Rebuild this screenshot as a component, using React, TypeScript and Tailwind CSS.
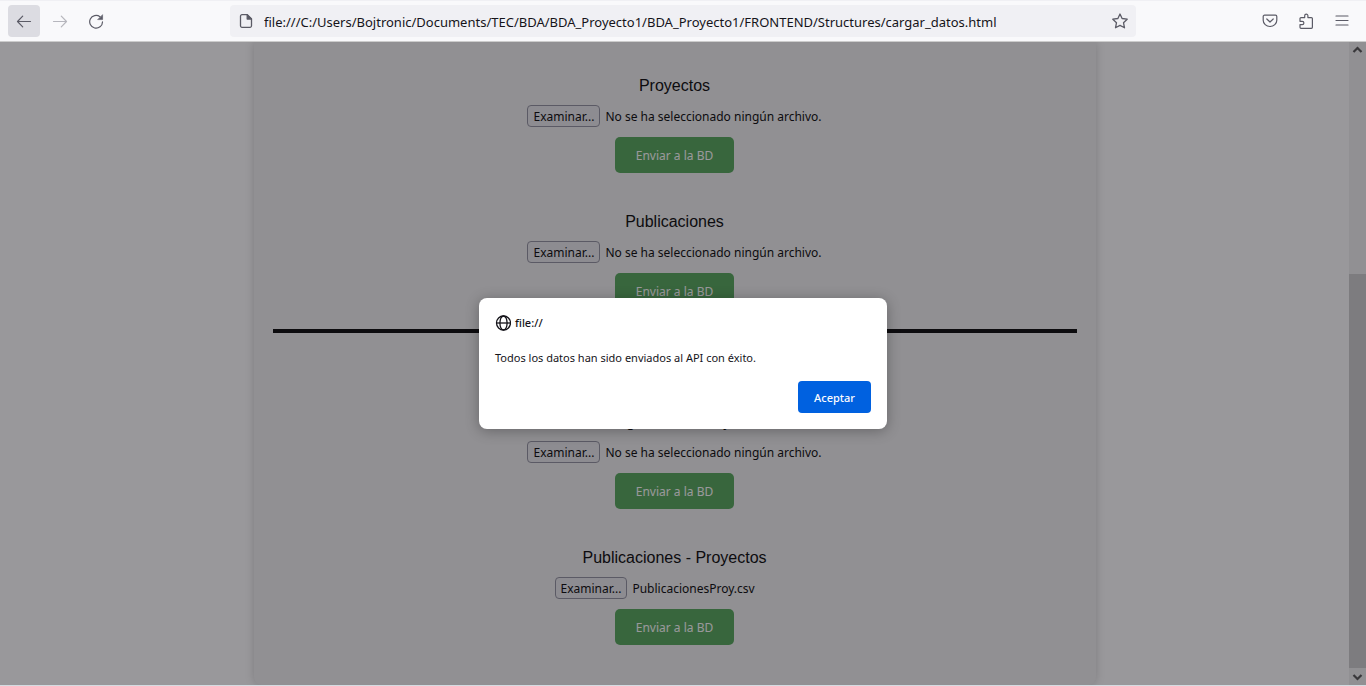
import React from "react";

type UploadProps = { id: string; title: string; fileName?: string };

function Upload({ id, title, fileName }: UploadProps) {
  return (
    <form className="flex flex-col items-center gap-2.5" onSubmit={(e) => e.preventDefault()}>
      <h3 className="font-['Liberation_Sans',sans-serif] text-base leading-[18px]">{title}</h3>
      <label
        htmlFor={id}
        className="flex h-[22px] min-w-[240px] items-center gap-[5px] font-['Noto_Sans',sans-serif] text-[12px] leading-[18px] whitespace-nowrap"
      >
        <input id={id} type="file" className="sr-only" />
        <span className="flex h-[22px] items-center rounded-[4px] border border-[#8f8f9d] bg-[#e9e9ed] px-[5px] pt-0.5">
          Examinar...
        </span>
        <span className="pt-0.5">{fileName ?? "No se ha seleccionado ningún archivo."}</span>
      </label>
      <button
        type="submit"
        className="h-9 rounded-[5px] bg-[#4fa554] px-[21px] pt-0.5 font-['Noto_Sans',sans-serif] text-[12px] text-white"
      >
        Enviar a la BD
      </button>
    </form>
  );
}

function ToolButton({
  label,
  active,
  children,
}: {
  label: string;
  active?: boolean;
  children: React.ReactNode;
}) {
  return (
    <button
      type="button"
      aria-label={label}
      className={
        active
          ? "flex size-8 items-center justify-center rounded-[4px] bg-[#dcdce2] text-[#5b5b66]"
          : "flex size-8 items-center justify-center rounded-[4px] text-[#5b5b66]"
      }
    >
      <svg viewBox="0 0 16 16" className="size-4" fill="none" stroke="currentColor" strokeWidth="1.2" strokeLinecap="round" strokeLinejoin="round" aria-hidden="true">
        {children}
      </svg>
    </button>
  );
}

function Toolbar() {
  return (
    <header className="flex h-[42px] shrink-0 items-center border-t border-b border-t-[#f0f0f4] border-b-[#cccccc] bg-[#f9f9fb] px-2">
      <nav className="flex gap-1" aria-label="Navegación">
        <ToolButton label="Atrás" active>
          <path d="M14.5 8.500H1.500M6.700 3.200 1.500 8.500l5.200 5.300" />
        </ToolButton>
        <ToolButton label="Adelante">
          <path d="M1.500 8.500h13M9.300 3.200l5.200 5.300-5.200 5.300" opacity=".42" />
        </ToolButton>
        <ToolButton label="Recargar">
          <path d="M14.500 8.900A6.400 6.400 0 1 1 12 3.700" />
          <path d="M14.600 2v4.600H10z" fill="currentColor" strokeWidth=".6" />
        </ToolButton>
      </nav>
      <div className="mx-[118px] flex h-8 min-w-0 flex-1 items-center rounded-[4px] bg-[#f0f0f4] px-2">
        <svg viewBox="0 0 16 16" className="size-4 shrink-0 text-[#5b5b66]" fill="none" stroke="currentColor" strokeWidth="1.3" strokeLinejoin="round" aria-hidden="true">
          <path d="M9.200 1.700H4A1.500 1.500 0 0 0 2.500 3.200v9.600A1.500 1.500 0 0 0 4 14.300h8a1.500 1.500 0 0 0 1.500-1.500V6z" />
          <path d="M9.200 1.700V6h4.300z" fill="currentColor" />
        </svg>
        <input
          type="text"
          aria-label="Dirección"
          defaultValue="file:///C:/Users/Bojtronic/Documents/TEC/BDA/BDA_Proyecto1/BDA_Proyecto1/FRONTEND/Structures/cargar_datos.html"
          className="ml-2.5 min-w-0 flex-1 bg-transparent pt-[3px] font-['Noto_Sans',sans-serif] text-[13px] text-[#15141a] outline-none"
        />
        <button type="button" aria-label="Añadir a marcadores" className="size-4 shrink-0 text-[#5b5b66]">
          <svg viewBox="0 0 16 16" className="size-4" fill="none" stroke="currentColor" strokeWidth="1.3" strokeLinejoin="round" aria-hidden="true">
            <path d="M8 1 10.100 5.500 15.200 6.200 11.500 9.700 12.500 14.800 8 12.400 3.500 14.800 4.500 9.700.800 6.200 5.900 5.500z" />
          </svg>
        </button>
      </div>
      <div className="flex gap-1">
        <ToolButton label="Guardar en Pocket">
          <path d="M2.500 2.200h11a1.300 1.300 0 0 1 1.300 1.300v3.700a6.800 6.300 0 0 1-13.600 0V3.500a1.300 1.300 0 0 1 1.300-1.300zM4.800 6 8 9l3.200-3" />
        </ToolButton>
        <ToolButton label="Extensiones">
          <path d="M2 8.300V5.600a1 1 0 0 1 1-1h3.700V2.700a1.600 1.600 0 0 1 3.200 0v1.900h3.500a1 1 0 0 1 1 1v8.700a1 1 0 0 1-1 1H3a1 1 0 0 1-1-1v-2.600h2.200a1.700 1.700 0 0 0 0-3.400z" />
        </ToolButton>
        <ToolButton label="Menú">
          <path d="M2 3h12M2 7.500h12M2 12h12" />
        </ToolButton>
      </div>
    </header>
  );
}

function ScrollBar() {
  return (
    <div className="flex w-[17px] shrink-0 flex-col bg-[#f0f0f0] text-[#505050]" aria-hidden="true">
      <svg viewBox="0 0 17 17" className="size-[17px]" fill="none" stroke="currentColor" strokeWidth="2.2">
        <path d="M4.500 10 8.500 6l4 4" />
      </svg>
      <div className="flex-[215]" />
      <div className="flex-[394] bg-[#cdcdcd]" />
      <svg viewBox="0 0 17 17" className="size-[17px]" fill="none" stroke="currentColor" strokeWidth="2.2">
        <path d="m4.500 7 4 4 4-4" />
      </svg>
    </div>
  );
}

function AlertDialog() {
  return (
    <div className="absolute inset-0 flex items-start justify-center bg-[#1c1b22]/45 pt-64">
      <div
        role="alertdialog"
        aria-modal="true"
        aria-labelledby="alert-origin"
        aria-describedby="alert-message"
        className="flex w-[408px] flex-col rounded-lg bg-white p-4 font-['Noto_Sans',sans-serif] text-[11px] leading-[18px] text-[#15141a] shadow-[0_2px_14px_rgba(0,0,0,0.3)]"
      >
        <div className="flex items-center gap-1">
          <svg viewBox="0 0 16 16" className="size-4" fill="none" stroke="currentColor" strokeWidth="1.3" aria-hidden="true">
            <circle cx="8.500" cy="8" r="7" />
            <ellipse cx="8.500" cy="8" rx="3.600" ry="7" />
            <path d="M1.500 8h14" />
          </svg>
          <h2 id="alert-origin" className="font-medium">file://</h2>
        </div>
        <p id="alert-message" className="mt-[17px]">Todos los datos han sido enviados al API con éxito.</p>
        <button
          type="button"
          className="mt-3.5 h-8 self-end rounded-[4px] bg-[#0061e0] px-4 pt-0.5 font-medium text-[#fbfbfe]"
        >
          Aceptar
        </button>
      </div>
    </div>
  );
}

export default function App() {
  return (
    <div className="flex min-h-screen flex-col border-b border-[#d5dce2] bg-white text-black">
      <Toolbar />
      <div className="relative flex flex-1 overflow-hidden">
        <main className="flex min-w-0 flex-1 justify-center">
          <div className="w-full max-w-[842px] rounded-b-lg bg-[#f0f0f0] px-[19px] pt-[35px] pb-10 shadow-[0_0_10px_rgba(0,0,0,0.2)]">
            <div className="flex flex-col gap-10">
              <Upload id="proyectos" title="Proyectos" />
              <Upload id="publicaciones" title="Publicaciones" />
            </div>
            <hr className="mt-5 mb-20 border-t-4 border-black" />
            <div className="flex flex-col gap-10">
              <Upload id="investigadores-proyectos" title="Investigadores - Proyectos" />
              <Upload id="publicaciones-proyectos" title="Publicaciones - Proyectos" fileName="PublicacionesProy.csv" />
            </div>
          </div>
        </main>
        <ScrollBar />
        <AlertDialog />
      </div>
    </div>
  );
}
